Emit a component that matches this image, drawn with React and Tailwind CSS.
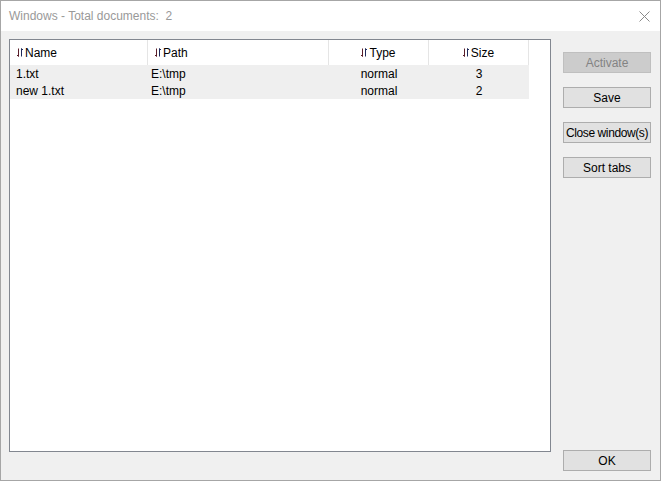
import React from 'react';

const rows = [
    { name: '1.txt', path: 'E:\\tmp', type: 'normal', size: '3' },
    { name: 'new 1.txt', path: 'E:\\tmp', type: 'normal', size: '2' },
];

// tiny down/up sort arrows used in the header cells
const SortIcon = () => (
    <svg width="6" height="9" viewBox="0 0 6 9" className="mr-[2px] shrink-0">
        <path d="M1.5 0.5V8.5M0 7L1.5 8.5" stroke="#5a1f2a" strokeWidth="1" fill="none" />
        <path d="M4.5 8.5V0.5M6 2L4.5 0.5" stroke="#1f2a5a" strokeWidth="1" fill="none" />
    </svg>
);

const Btn = ({ children, disabled, className = '' }) => (
    <button
        className={`w-[88px] h-[21px] border text-[12px] leading-none whitespace-nowrap flex items-center justify-center ${disabled ? 'bg-[#cccccc] border-[#bfbfbf] text-[#838383]' : 'bg-[#e1e1e1] border-[#adadad] text-black'} ${className}`}
    >
        {children}
    </button>
);

export default function App() {
    return (
        <div className="w-[661px] h-[481px] border border-[#a6a6a6] flex flex-col bg-[#f0f0f0] text-[12px] text-black" style={{ fontFamily: '"Liberation Sans", Arial, sans-serif' }}>
            {/* title bar */}
            <div className="h-[30px] bg-white flex items-center justify-between pl-[8px] pr-[10px] shrink-0">
                <span className="text-[12px] text-[#999999]">Windows - Total documents:&nbsp; 2</span>
                <svg width="11" height="11" viewBox="0 0 11 11">
                    <path d="M0.5 0.5L10.5 10.5M10.5 0.5L0.5 10.5" stroke="#8a8a8a" strokeWidth="1" />
                </svg>
            </div>

            <div className="flex flex-1 pt-[8px] pl-[8px] pr-[9px] pb-[9px]">
                {/* list */}
                <div className="w-[542px] h-[413px] border border-[#828790] bg-white">
                    <div className="flex h-[25px] items-center">
                        <div className="w-[138px] h-full flex items-center pl-[7px] border-r border-[#e5e5e5]"><SortIcon />Name</div>
                        <div className="w-[181px] h-full flex items-center pl-[7px] border-r border-[#e5e5e5]"><SortIcon />Path</div>
                        <div className="w-[100px] h-full flex items-center justify-center border-r border-[#e5e5e5]"><SortIcon />Type</div>
                        <div className="w-[100px] h-full flex items-center justify-center border-r border-[#e5e5e5]"><SortIcon />Size</div>
                    </div>
                    {rows.map((r) => (
                        <div key={r.name} className="flex w-[519px] h-[17px] items-center bg-[#efefef]">
                            <div className="w-[138px] pl-[6px]">{r.name}</div>
                            <div className="w-[181px] pl-[3px]">{r.path}</div>
                            <div className="w-[100px] text-center">{r.type}</div>
                            <div className="w-[100px] text-center">{r.size}</div>
                        </div>
                    ))}
                </div>

                {/* buttons */}
                <div className="flex flex-col ml-[12px] pt-[13px] gap-[14px] flex-1">
                    <Btn disabled>Activate</Btn>
                    <Btn>Save</Btn>
                    <Btn className="tracking-[-0.4px]">Close window(s)</Btn>
                    <Btn>Sort tabs</Btn>
                    <div className="flex-1" />
                    <Btn>OK</Btn>
                </div>
            </div>
        </div>
    );
}
